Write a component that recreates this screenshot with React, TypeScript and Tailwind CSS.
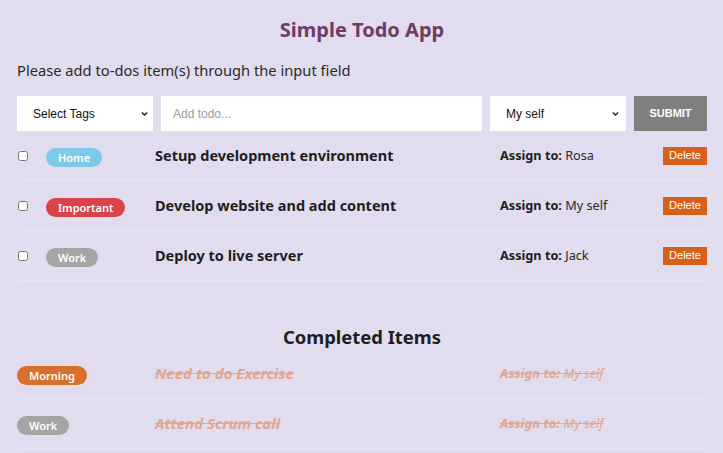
import React, { useState } from 'react';

type Todo = {
  id: number;
  tag: string;
  title: string;
  assignee: string;
};

const tagColors: Record<string, string> = {
  Home: 'bg-[#7dc9e7]',
  Important: 'bg-[#d9434b]',
  Work: 'bg-[#a5a5a5]',
  Morning: 'bg-[#d86f2c]',
};

const pending: Todo[] = [
  { id: 1, tag: 'Home', title: 'Setup development environment', assignee: 'Rosa' },
  { id: 2, tag: 'Important', title: 'Develop website and add content', assignee: 'My self' },
  { id: 3, tag: 'Work', title: 'Deploy to live server', assignee: 'Jack' },
];

const completed: Todo[] = [
  { id: 4, tag: 'Morning', title: 'Need to do Exercise', assignee: 'My self' },
  { id: 5, tag: 'Work', title: 'Attend Scrum call', assignee: 'My self' },
];

function Badge({ tag }: { tag: string }) {
  return (
    <span
      className={`${tagColors[tag]} inline-flex h-[19px] items-center rounded-full px-[12px] text-[11px] font-semibold leading-none text-white`}
    >
      {tag}
    </span>
  );
}

export default function App() {
  const [todo, setTodo] = useState('');

  return (
    <div className="min-h-screen bg-[#e1dcee] font-['Noto_Sans','Open_Sans',sans-serif] text-[#212121]">
      <div className="pl-[17px] pr-[16px] pt-[14px]">
        <h1 className="text-center text-[20px] font-bold leading-[32px] text-[#6e3d64]">Simple Todo App</h1>
        <p className="mt-[14px] text-[14.7px] leading-[20px] text-[#2a2a2a]">
          Please add to-dos item(s) through the input field
        </p>

        {/* Input row */}
        <div className="mt-[16px] flex h-[35px] items-stretch gap-[8px] font-['Liberation_Sans',Arial,sans-serif] text-[12px]">
          <div className="relative w-[136px] bg-white">
            <select className="h-full w-full appearance-none bg-transparent pl-[16px] text-[12px] text-[#111] outline-none">
              <option>Select Tags</option>
            </select>
            <svg className="pointer-events-none absolute right-[5px] top-[15px]" width="7" height="6" viewBox="0 0 8 6">
              <path d="M1 1.2 4 4.2 7 1.2" fill="none" stroke="#222" strokeWidth="1.6" />
            </svg>
          </div>
          <input
            value={todo}
            onChange={(e) => setTodo(e.target.value)}
            placeholder="Add todo..."
            className="w-[321px] bg-white px-[12px] text-[12px] text-[#111] placeholder-[#9a9a9a] outline-none"
          />
          <div className="relative w-[136px] bg-white">
            <select className="h-full w-full appearance-none bg-transparent pl-[16px] text-[12px] text-[#111] outline-none">
              <option>My self</option>
            </select>
            <svg className="pointer-events-none absolute right-[7px] top-[15px]" width="7" height="6" viewBox="0 0 8 6">
              <path d="M1 1.2 4 4.2 7 1.2" fill="none" stroke="#222" strokeWidth="1.6" />
            </svg>
          </div>
          <button className="flex-1 bg-[#7f7f7f] text-[11px] font-bold text-white">SUBMIT</button>
        </div>

        {/* Pending todos */}
        <div>
          {pending.map((t) => (
            <div key={t.id} className="flex h-[50px] items-center border-b border-[#e8e4f3]">
              <div className="flex w-[138px] items-center">
                <input type="checkbox" className="ml-[1px] h-[10px] w-[10px] accent-white" />
                <div className="ml-[18px]">
                  <Badge tag={t.tag} />
                </div>
              </div>
              <div className="flex-1 text-[14.5px] font-bold text-[#1e1e1e]">{t.title}</div>
              <div className="w-[163px] text-[12.7px] text-[#2a2a2a]">
                <span className="font-bold text-[#1e1e1e]">Assign to:</span> {t.assignee}
              </div>
              <button className="h-[18px] w-[44px] bg-[#d4601b] font-['Liberation_Sans',Arial,sans-serif] text-[11px] leading-none text-white">
                Delete
              </button>
            </div>
          ))}
        </div>

        {/* Completed */}
        <h2 className="mt-[44px] text-center text-[18.4px] font-bold leading-[24px] text-[#1e1e1e]">Completed Items</h2>
        <div>
          {completed.map((t) => (
            <div key={t.id} className="flex h-[50px] items-center border-b border-[#e8e4f3]">
              <div className="w-[138px]">
                <Badge tag={t.tag} />
              </div>
              <div className="flex-1 text-[15px] font-bold italic text-[#e3a68d] line-through">{t.title}</div>
              <div className="w-[207px] text-[13px] italic text-[#e3a68d] line-through">
                <span className="font-bold">Assign to:</span> {t.assignee}
              </div>
            </div>
          ))}
        </div>
      </div>
    </div>
  );
}
